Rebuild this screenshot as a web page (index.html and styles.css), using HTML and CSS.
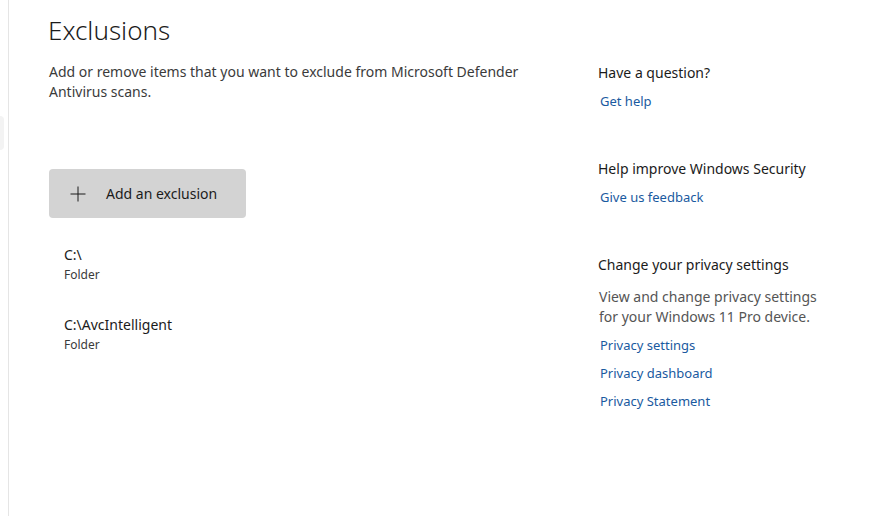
FILE: index.html
```html
<!DOCTYPE html>
<html lang="en">
<head>
    <meta charset="UTF-8">
    <title>Exclusions</title>
    <link rel="stylesheet" href="styles.css">
</head>
<body>
    <div class="rail">
        <div class="rail-tab"></div>
    </div>
    <div id="page">
        <div class="main">
            <h1 class="title">Exclusions</h1>
            <p class="desc">Add or remove items that you want to exclude from Microsoft Defender Antivirus scans.</p>
            <button class="add-button">
                <svg class="plus" width="16" height="16" viewBox="0 0 16 16">
                    <path d="M8 0.5V15.5M0.5 8H15.5" stroke="#1b1b1b" stroke-width="1" fill="none"/>
                </svg>
                <span>Add an exclusion</span>
            </button>
            <div class="items">
                <div class="item">
                    <div class="item-name">C:\</div>
                    <div class="item-type">Folder</div>
                </div>
                <div class="item">
                    <div class="item-name">C:\AvcIntelligent</div>
                    <div class="item-type">Folder</div>
                </div>
            </div>
        </div>
        <div class="side">
            <div class="side-block">
                <h2 class="side-title">Have a question?</h2>
                <div class="links">
                    <a class="link" href="#">Get help</a>
                </div>
            </div>
            <div class="side-block">
                <h2 class="side-title">Help improve Windows Security</h2>
                <div class="links">
                    <a class="link" href="#">Give us feedback</a>
                </div>
            </div>
            <div class="side-block">
                <h2 class="side-title">Change your privacy settings</h2>
                <p class="side-desc">View and change privacy settings for your Windows 11 Pro device.</p>
                <div class="links links-after-desc">
                    <a class="link" href="#">Privacy settings</a>
                    <a class="link" href="#">Privacy dashboard</a>
                    <a class="link" href="#">Privacy Statement</a>
                </div>
            </div>
        </div>
    </div>
</body>
</html>
```
FILE: styles.css
```css
body {
    font-family: "Noto Sans", "Open Sans", sans-serif;
    margin: 0;
    height: 516px;
    overflow: hidden;
    display: flex;
    background-color: #ffffff;
    color: #1b1b1b;
}
.rail {
    width: 8px;
    border-right: 1px solid #e5e5e5;
    padding-top: 116px;
}
.rail-tab {
    width: 4px;
    height: 34px;
    background-color: #f3f3f3;
    border-radius: 0 4px 4px 0;
}
#page {
    display: flex;
    flex: 1;
}
.main {
    width: 589px;
    padding-left: 40px;
    box-sizing: border-box;
}
.title {
    font-size: 26px;
    font-weight: 300;
    margin: 12px 0 0 -1px;
    line-height: 36px;
}
.desc {
    font-size: 14px;
    line-height: 20px;
    color: #3b3b3b;
    margin: 14px 0 0 0;
    width: 490px;
}
.add-button {
    display: flex;
    align-items: center;
    width: 197px;
    height: 49px;
    margin-top: 67px;
    padding: 0 0 0 21px;
    border: none;
    border-radius: 4px;
    background-color: #d3d3d3;
    font-family: inherit;
    font-size: 14px;
    color: #1b1b1b;
}
.plus {
    margin-right: 20px;
}
.items {
    margin-top: 26px;
    padding-left: 15px;
}
.item {
    height: 70px;
}
.item-name {
    font-size: 14px;
    line-height: 22px;
}
.item-type {
    font-size: 12px;
    line-height: 18px;
    color: #3b3b3b;
}
.side {
    padding-top: 62px;
}
.side-block {
    margin-bottom: 43px;
}
.side-title {
    font-size: 14px;
    font-weight: 400;
    line-height: 22px;
    margin: 0;
}
.side-desc {
    font-size: 14px;
    line-height: 20px;
    color: #555555;
    margin: 11px 0 0 1px;
    width: 230px;
}
.links {
    margin-top: 3px;
}
.links-after-desc {
    margin-top: 4px;
}
.link {
    display: block;
    color: #1a5aa0;
    text-decoration: none;
    font-size: 13px;
    line-height: 28px;
    margin-left: 2px;
}
```
